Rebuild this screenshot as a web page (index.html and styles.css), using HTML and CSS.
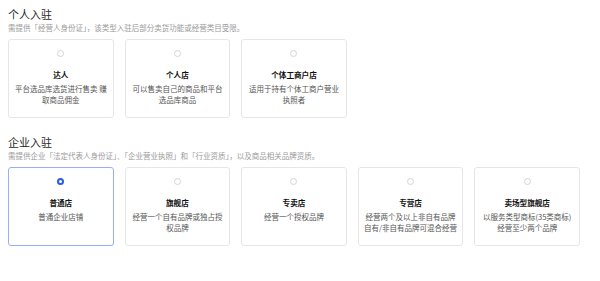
FILE: index.html
```html
<!DOCTYPE html>
<html lang="zh-CN">
<head>
<meta charset="utf-8">
<link rel="stylesheet" href="styles.css">
</head>
<body>
<section class="sec">
  <h2 class="sec-title">个人入驻</h2>
  <p class="sec-sub">需提供「经营人身份证」，该类型入驻后部分卖货功能或经营类目受限。</p>
  <div class="cards">
    <div class="card"><span class="radio"></span><div class="name">达人</div><div class="desc nowrap">平台选品库选货进行售卖 赚<br>取商品佣金</div></div>
    <div class="card"><span class="radio"></span><div class="name">个人店</div><div class="desc nowrap">可以售卖自己的商品和平台<br>选品库商品</div></div>
    <div class="card"><span class="radio"></span><div class="name">个体工商户店</div><div class="desc nowrap">适用于持有个体工商户营业<br>执照者</div></div>
  </div>
</section>
<section class="sec sec2">
  <h2 class="sec-title">企业入驻</h2>
  <p class="sec-sub">需提供企业「法定代表人身份证」、「企业营业执照」和「行业资质」，以及商品相关品牌资质。</p>
  <div class="cards">
    <div class="card active"><span class="radio on"></span><div class="name">普通店</div><div class="desc">普通企业店铺</div></div>
    <div class="card"><span class="radio"></span><div class="name">旗舰店</div><div class="desc nowrap">经营一个自有品牌或独占授<br>权品牌</div></div>
    <div class="card"><span class="radio"></span><div class="name">专卖店</div><div class="desc">经营一个授权品牌</div></div>
    <div class="card"><span class="radio"></span><div class="name">专营店</div><div class="desc nowrap">经营两个及以上非自有品牌<br>自有/非自有品牌可混合经营</div></div>
    <div class="card"><span class="radio"></span><div class="name">卖场型旗舰店</div><div class="desc nowrap">以服务类型商标(35类商标)<br>经营至少两个品牌</div></div>
  </div>
</section>
</body>
</html>
```
FILE: styles.css
```css
* { box-sizing: border-box; }
body {
  margin: 8px;
  background: #fff;
  font-family: "Noto Sans CJK SC", "Noto Sans", sans-serif;
  color: #1f1f1f;
}
.sec-title {
  margin: 0;
  font-size: 11px;
  font-weight: 400;
  line-height: 12px;
  color: #1f1f1f;
}
.sec-sub {
  margin: 3px 0 0;
  font-size: 7.5px;
  line-height: 10px;
  color: #9a9a9a;
}
.sec2 { margin-top: 18px; }
.cards {
  margin-top: 6px;
  display: grid;
  grid-template-columns: repeat(5, 105.6px);
  column-gap: 11px;
}
.card {
  height: 79px;
  border: 1px solid #e6e6e6;
  border-radius: 3px;
  padding-top: 10px;
  display: flex;
  flex-direction: column;
  align-items: center;
  text-align: center;
}
.card.active { border-color: #9aaef7; }
.radio {
  width: 7px;
  height: 7px;
  border: 1px solid #d4d4d4;
  border-radius: 50%;
}
.radio.on {
  border: 2px solid #2a5be8;
  background: #fff;
}
.name {
  margin-top: 13px;
  font-size: 7.6px;
  font-weight: 700;
  line-height: 10px;
  color: #111;
}
.desc {
  margin-top: 3px;
  padding: 0 6px;
  font-size: 7.5px;
  line-height: 11px;
  color: #555;
}
.desc.nowrap { white-space: nowrap; padding: 0; }
```
